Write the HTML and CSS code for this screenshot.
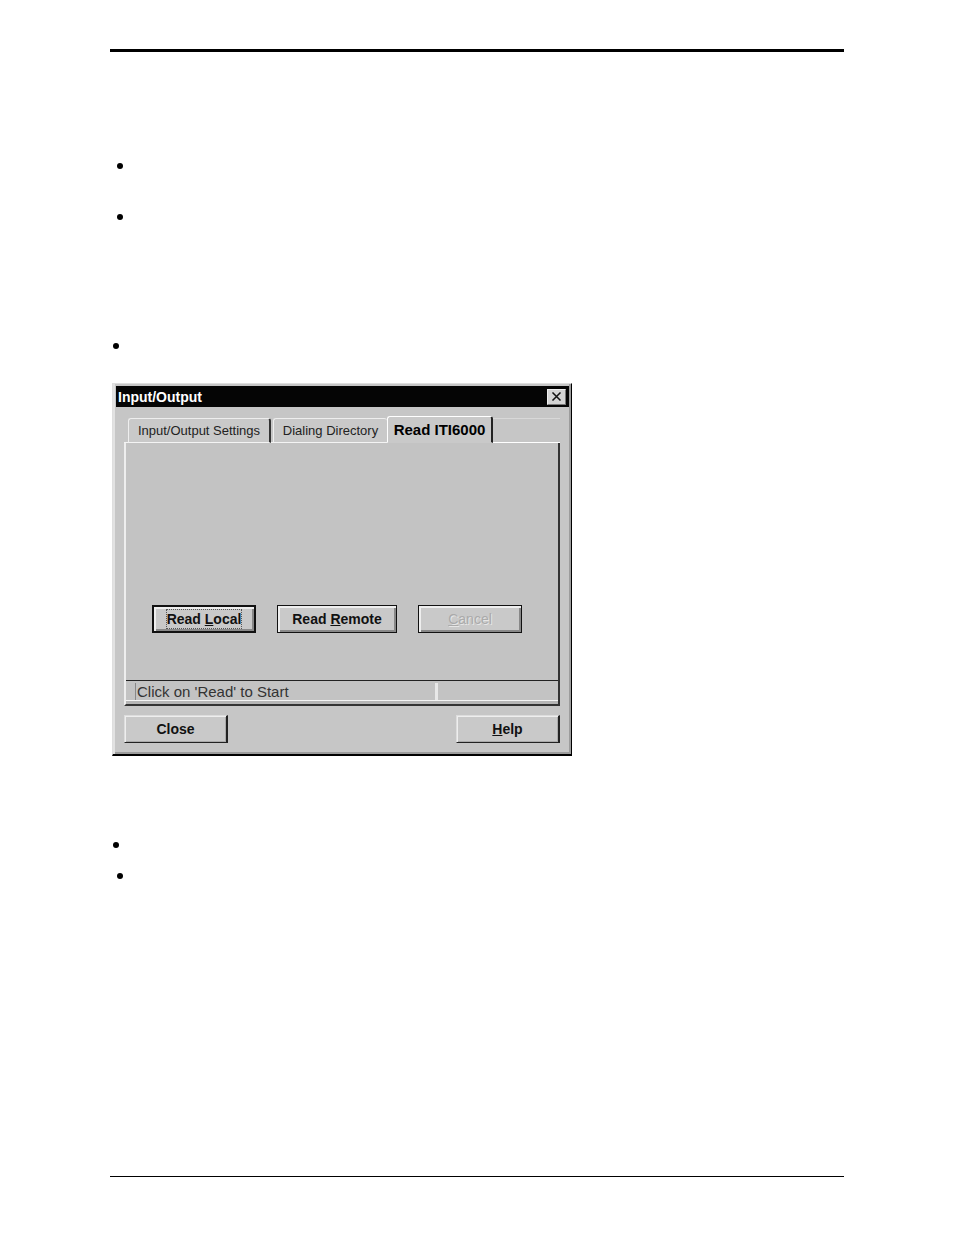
FILE: index.html
```html
<!DOCTYPE html>
<html lang="en">
<head>
  <meta charset="UTF-8">
  <title>Input/Output</title>
  <link rel="stylesheet" href="styles.css">
</head>
<body>
  <main class="page">
    <ul class="bullets intro">
      <li></li>
      <li></li>
    </ul>
    <ul class="bullets step">
      <li></li>
    </ul>

    <section class="dialog" role="dialog" aria-labelledby="dialogTitle">
      <div class="titlebar">
        <span id="dialogTitle">Input/Output</span>
        <button class="close-x" type="button" aria-label="Close window">
          <svg width="11" height="9" viewBox="0 0 11 9"><path d="M1.5 0.5 L9.5 8.5 M9.5 0.5 L1.5 8.5" stroke="#111" stroke-width="1.5"/></svg>
        </button>
      </div>

      <div class="content">
        <div class="tabs" role="tablist">
          <button class="tab tab-settings" type="button" role="tab" aria-selected="false">Input/Output Settings</button>
          <button class="tab tab-dialing" type="button" role="tab" aria-selected="false">Dialing Directory</button>
          <button class="tab active" type="button" role="tab" aria-selected="true">Read ITI6000</button>
          <span class="tab-rest"></span>
        </div>

        <div class="panel" role="tabpanel">
          <div class="actions">
            <button class="btn default" type="button"><span class="focus">Read <u>L</u>ocal</span></button>
            <button class="btn wide" type="button">Read <u>R</u>emote</button>
            <button class="btn" type="button" disabled><u>C</u>ancel</button>
          </div>
          <div class="status">
            <span class="status-text">Click on 'Read' to Start</span>
            <span class="status-extra"></span>
          </div>
        </div>

        <div class="bottom">
          <button class="btn flat" type="button">Close</button>
          <button class="btn flat" type="button"><u>H</u>elp</button>
        </div>
      </div>
    </section>

    <ul class="bullets step">
      <li></li>
    </ul>
    <ul class="bullets last">
      <li></li>
    </ul>
  </main>
</body>
</html>
```

FILE: styles.css
```css
* {
  box-sizing: border-box;
}

body {
  margin: 0;
  background: #fff;
  color: #000;
  font-family: "Liberation Sans", Arial, sans-serif;
}

.page {
  margin: 49px 110px 58px;
  min-height: calc(100vh - 107px);
  border-top: 3px solid #000;
  border-bottom: 1px solid #000;
}

/* bullets */
.bullets {
  list-style: none;
  margin: 0;
  padding: 0 0 0 3px;
}

.bullets li {
  display: flex;
  height: 6px;
}

.bullets li::before {
  content: "";
  width: 6px;
  height: 6px;
  border-radius: 50%;
  background: #000;
}

.intro {
  display: flex;
  flex-direction: column;
  gap: 45px;
  padding: 111px 0 0 7px;
}

.intro + .step {
  margin: 123px 0 34px;
}

.last {
  margin-top: 25px;
  padding-left: 7px;
}

/* dialog */
.dialog {
  width: 460px;
  max-width: 100%;
  margin: 0 0 86px 2px;
  padding: 2px 2px 3px 3px;
  background: #c6c6c6;
  border: 1px solid #dedede;
  border-right: 1px solid #000;
  border-bottom: 2px solid #000;
  box-shadow: inset 2px 0 0 #e2e2e2, inset -2px -2px 0 #9c9c9c;
}

.titlebar {
  display: flex;
  align-items: center;
  justify-content: space-between;
  height: 21px;
  padding: 0 3px 0 2px;
  background: #050505;
  color: #fff;
  font-size: 14px;
  font-weight: bold;
  line-height: 20px;
}

.close-x {
  display: flex;
  align-items: center;
  justify-content: center;
  width: 19px;
  height: 16px;
  padding: 0;
  background: #d4d4d4;
  border: 1px solid #eee;
  border-right-color: #777;
  border-bottom-color: #777;
}

.content {
  padding: 9px 9px 8px 8px;
}

/* tabs */
.tabs {
  display: flex;
  align-items: flex-end;
  padding-left: 4px;
  box-shadow: inset 0 -1px 0 #f4f4f4;
}

.tab {
  height: 25px;
  padding: 0;
  background: #c9c9c9;
  border: 1px solid #eee;
  border-right: 2px solid #333;
  border-bottom-color: #f4f4f4;
  border-radius: 3px 3px 0 0;
  color: #222;
  font-family: inherit;
  font-size: 13px;
  white-space: nowrap;
}

.tab-settings {
  width: 143px;
}

.tab-dialing {
  width: 114px;
  margin-left: 2px;
  border-right: 0;
}

.tab.active {
  width: 106px;
  height: 27px;
  border-color: #fff #222 #c9c9c9 #fff;
  color: #000;
  font-size: 15px;
  font-weight: bold;
}

.tab-rest {
  flex: 1;
  height: 25px;
  border-top: 1px solid #d8d8d8;
  border-bottom: 1px solid #fff;
}

/* panel */
.panel {
  background: #c3c3c3;
  border-left: 2px solid #eee;
  border-right: 2px solid #333;
  border-bottom: 2px solid #333;
}

.actions {
  display: flex;
  gap: 21px;
  padding: 162px 0 47px 26px;
}

.btn {
  width: 104px;
  height: 28px;
  padding: 0;
  background: #c9c9c9;
  border: 1px solid #111;
  box-shadow: inset 2px 2px 0 #eee, inset -2px -2px 0 #888;
  color: #111;
  font-family: inherit;
  font-size: 14px;
  font-weight: bold;
  line-height: 18px;
}

.btn.wide {
  width: 120px;
}

.btn.default {
  border-width: 2px;
}

.btn:disabled {
  color: #aaa;
  font-weight: normal;
  text-shadow: 1px 1px 0 #e6e6e6;
}

.focus {
  display: inline-block;
  outline: 1px dotted #555;
}

.status {
  display: flex;
  align-items: center;
  height: 24px;
  padding: 0 1px 2px 9px;
  border-top: 1px solid #222;
  box-shadow: inset 0 -3px 0 #b5b5b5, inset 0 -4px 0 #f4f4f4;
  color: #333;
  font-size: 15px;
}

.status-text {
  width: 303px;
  padding-left: 1px;
  border-left: 1px solid #888;
  border-right: 3px solid #e8e8e8;
  line-height: 17px;
}

.status-extra {
  flex: 1;
}

.bottom {
  display: flex;
  justify-content: space-between;
  padding-top: 9px;
}

.btn.flat {
  border-color: #ddd #222 #222 #ddd;
  border-right-width: 2px;
  box-shadow: inset 1px 1px 0 #eee, inset -1px -1px 0 #aaa;
}
```
